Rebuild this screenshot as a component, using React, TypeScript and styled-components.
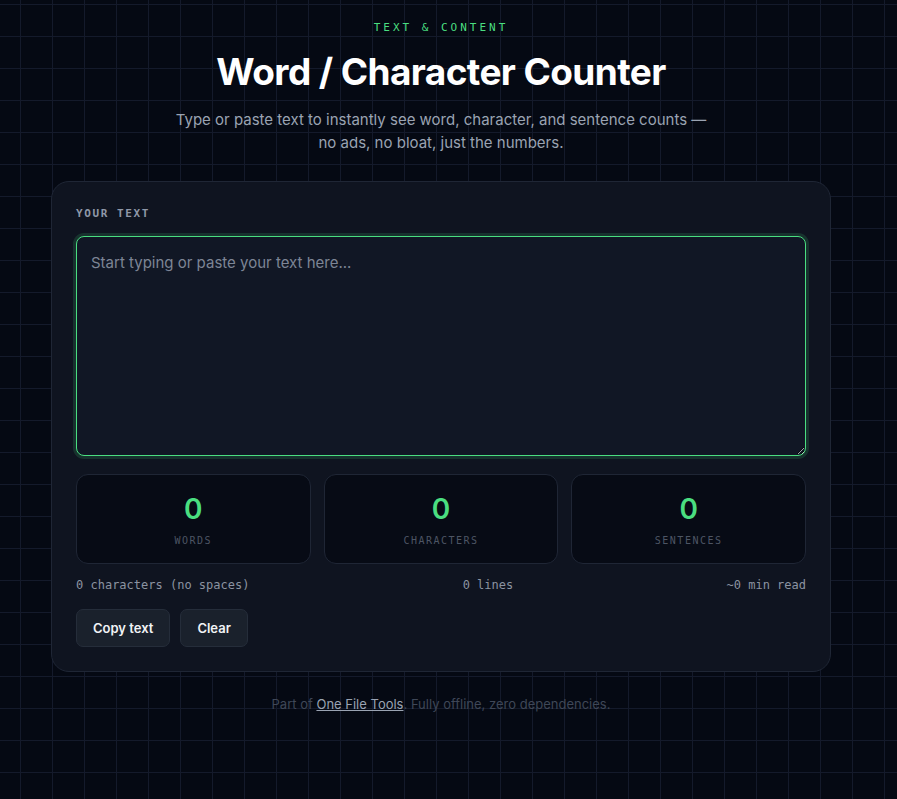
import React, { useState } from 'react';
import styled, { createGlobalStyle } from 'styled-components';

const GlobalStyle = createGlobalStyle`
  * { box-sizing: border-box; }
  html, body {
    margin: 0;
    padding: 0;
    background-color: #050913;
    background-image:
      linear-gradient(to right, #141a2b 1px, transparent 1px),
      linear-gradient(to bottom, #141a2b 1px, transparent 1px);
    background-size: 32px 32px;
    background-position: 20px 4px;
    min-height: 100vh;
    font-family: Inter, "Liberation Sans", sans-serif;
    color: #e5e7eb;
  }
`;

const Page = styled.main`
  display: flex;
  flex-direction: column;
  align-items: center;
  padding: 20px 30px 40px 15px;
`;

const Eyebrow = styled.div`
  font-family: "DejaVu Sans Mono", monospace;
  font-size: 11px;
  letter-spacing: 3px;
  color: #4ade80;
  line-height: 16px;
`;

const Title = styled.h1`
  margin: 14px 0 0;
  font-family: Inter, "Liberation Sans", sans-serif;
  font-size: 37px;
  font-weight: 700;
  letter-spacing: -0.6px;
  line-height: 44px;
  color: #ffffff;
`;

const Lead = styled.p`
  margin: 14px 0 0;
  max-width: 545px;
  text-align: center;
  font-size: 15px;
  line-height: 23px;
  color: #9aa3b2;
`;

const Card = styled.section`
  margin-top: 27px;
  width: 780px;
  background: #0f1420;
  border: 1px solid #1f2635;
  border-radius: 18px;
  padding: 24px;
`;

const FieldLabel = styled.label`
  display: block;
  font-family: "DejaVu Sans Mono", monospace;
  font-size: 11px;
  font-weight: 700;
  letter-spacing: 1.6px;
  color: #8f98a8;
  line-height: 14px;
  margin: 1px 0 15px;
`;

const TextArea = styled.textarea`
  display: block;
  width: 100%;
  height: 220px;
  resize: vertical;
  background: #111725;
  border: 1px solid #4ade80;
  border-radius: 8px;
  box-shadow: 0 0 0 3px rgba(74, 222, 128, 0.15);
  outline: none;
  padding: 15px 14px;
  color: #e5e7eb;
  caret-color: #ffffff;
  font-family: Inter, "Liberation Sans", sans-serif;
  font-size: 15px;
  line-height: 22px;

  &::placeholder { color: #7d8595; }
`;

const Stats = styled.div`
  display: grid;
  grid-template-columns: repeat(3, 1fr);
  gap: 13px;
  margin-top: 18px;
`;

const StatBox = styled.div`
  height: 90px;
  background: #070b15;
  border: 1px solid #1f2635;
  border-radius: 12px;
  display: flex;
  flex-direction: column;
  align-items: center;
  padding-top: 17px;
`;

const StatValue = styled.div`
  font-family: Inter, "Liberation Sans", sans-serif;
  font-size: 28px;
  font-weight: 600;
  line-height: 34px;
  color: #4ade80;
`;

const StatLabel = styled.div`
  margin-top: 9px;
  font-family: "DejaVu Sans Mono", monospace;
  font-size: 10px;
  letter-spacing: 1.5px;
  color: #4d5564;
`;

const Meta = styled.div`
  display: flex;
  justify-content: space-between;
  margin-top: 13px;
  font-family: "DejaVu Sans Mono", monospace;
  font-size: 12px;
  line-height: 16px;
  color: #8b93a1;
`;

const Actions = styled.div`
  display: flex;
  gap: 10px;
  margin-top: 16px;
`;

const Button = styled.button`
  height: 38px;
  padding: 0 16px;
  background: #1a212c;
  border: 1px solid #252d3a;
  border-radius: 7px;
  color: #f1f3f6;
  font-family: Inter, "Liberation Sans", sans-serif;
  font-size: 13px;
  font-weight: 600;
  cursor: pointer;
`;

const Footer = styled.footer`
  margin-top: 24px;
  font-size: 13px;
  color: #3f4757;
`;

const FooterLink = styled.a`
  color: #9aa3b2;
  text-decoration: underline;
`;

function countSentences(text: string) {
  const m = text.match(/[^.!?]+[.!?]+/g);
  if (m) return m.length;
  return text.trim() ? 1 : 0;
}

export default function App() {
  const [text, setText] = useState('');

  const words = text.trim() ? text.trim().split(/\s+/).length : 0;
  const chars = text.length;
  const noSpaces = text.replace(/\s/g, '').length;
  const lines = text ? text.split('\n').length : 0;
  const sentences = countSentences(text);
  const minutes = Math.ceil(words / 200);

  return (
    <>
      <GlobalStyle />
      <Page>
        <Eyebrow>TEXT &amp; CONTENT</Eyebrow>
        <Title>Word / Character Counter</Title>
        <Lead>
          Type or paste text to instantly see word, character, and sentence counts — no ads, no
          bloat, just the numbers.
        </Lead>
        <Card>
          <FieldLabel htmlFor="text">YOUR TEXT</FieldLabel>
          <TextArea
            id="text"
            autoFocus
            value={text}
            onChange={e => setText(e.target.value)}
            placeholder="Start typing or paste your text here..."
          />
          <Stats>
            <StatBox>
              <StatValue>{words}</StatValue>
              <StatLabel>WORDS</StatLabel>
            </StatBox>
            <StatBox>
              <StatValue>{chars}</StatValue>
              <StatLabel>CHARACTERS</StatLabel>
            </StatBox>
            <StatBox>
              <StatValue>{sentences}</StatValue>
              <StatLabel>SENTENCES</StatLabel>
            </StatBox>
          </Stats>
          <Meta>
            <span>{noSpaces} characters (no spaces)</span>
            <span>{lines} lines</span>
            <span>~{minutes} min read</span>
          </Meta>
          <Actions>
            <Button onClick={() => navigator.clipboard?.writeText(text)}>Copy text</Button>
            <Button onClick={() => setText('')}>Clear</Button>
          </Actions>
        </Card>
        <Footer>
          Part of <FooterLink href="#">One File Tools</FooterLink>. Fully offline, zero dependencies.
        </Footer>
      </Page>
    </>
  );
}
